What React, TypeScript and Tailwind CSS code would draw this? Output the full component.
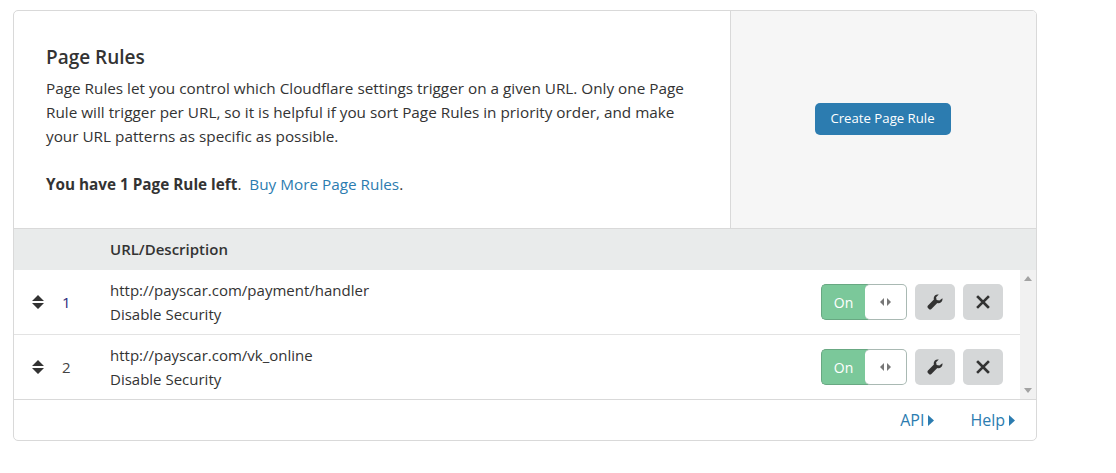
import React from "react";

const rules = [
  { id: 1, url: "http://payscar.com/payment/handler" },
  { id: 2, url: "http://payscar.com/vk_online" },
];

const SortIcon = () => (
  <svg width="12" height="16" viewBox="0 0 12 16" className="text-[#333]">
    <path d="M6 1 L12 7 L0 7 Z M0 9 L12 9 L6 15 Z" fill="currentColor" />
  </svg>
);

const WrenchIcon = () => (
  <svg width="16" height="16" viewBox="0 0 16 16">
    <path
      d="M15.4 4.2c.3 1.300-.1 2.800-1.100 3.800-1.100 1.100-2.600 1.400-4 1L4.400 14.900c-.7.7-1.800.7-2.500 0l-.9-.9c-.7-.7-.7-1.800 0-2.500l5.900-5.900c-.4-1.400-.1-2.900 1-4C8.900.6 10.400.2 11.800.6L9.100 3.300l.5 2.800 2.800.5 3-2.400z"
      fill="#333"
    />
  </svg>
);

const CloseIcon = () => (
  <svg width="14" height="14" viewBox="0 0 14 14">
    <path d="M2 2 L12 12 M12 2 L2 12" stroke="#333" strokeWidth="2.600" strokeLinecap="square" />
  </svg>
);

const Caret = () => (
  <svg width="6" height="11" viewBox="0 0 6 11" className="ml-[4px] inline-block">
    <path d="M0 0 L6 5.500 L0 11 Z" fill="#2c7cb0" />
  </svg>
);

const Toggle = () => (
  <div className="flex h-[36px] w-[86px]">
    <div className="flex w-[49px] items-center justify-center rounded-l-[5px] border border-r-0 border-[#68a882] bg-[#7bc89a] pr-[5px] text-[14px] text-white">
      On
    </div>
    <div className="-ml-[5px] flex flex-1 items-center justify-center gap-[3px] rounded-[5px] border border-l-0 border-[#a9b9b3] bg-white">
      <svg width="4" height="8" viewBox="0 0 4 8">
        <path d="M4 0 L0 4 L4 8 Z" fill="#777" />
      </svg>
      <svg width="4" height="8" viewBox="0 0 4 8">
        <path d="M0 0 L4 4 L0 8 Z" fill="#777" />
      </svg>
    </div>
  </div>
);

const IconButton = ({ children }: { children: React.ReactNode }) => (
  <button className="flex h-[36px] w-[40px] items-center justify-center rounded-[5px] bg-[#d5d7d8]">
    {children}
  </button>
);

export default function App() {
  return (
    <div className="min-h-[473px] bg-white pl-[13px] pt-[10px] font-['Open_Sans',sans-serif] text-[15px] text-[#333]">
      <div className="w-[1024px] overflow-hidden rounded-[5px] border border-[#d9d9d9]">
        {/* top panel */}
        <div className="flex h-[218px] border-b border-[#d9d9d9]">
          <div className="w-[716px] pl-[32px] pr-[42px] pt-[33px] text-[15.300px]">
            <h2 className="text-[19px] leading-[26px] font-semibold">Page Rules</h2>
            <p className="mt-[6px] leading-[24px]">
              Page Rules let you control which Cloudflare settings trigger on a given URL. Only one Page Rule will
              trigger per URL, so it is helpful if you sort Page Rules in priority order, and make your URL patterns
              as specific as possible.
            </p>
            <p className="mt-[24px] leading-[24px]">
              <b className="font-bold">You have 1 Page Rule left</b>.&nbsp; <span className="text-[#2c7cb0]">Buy More Page Rules</span>.
            </p>
          </div>
          <div className="flex flex-1 items-center justify-center border-l border-[#d9d9d9] bg-[#f6f6f6] pr-[2px] pb-[2px]">
            <button className="h-[32px] w-[136px] rounded-[5px] bg-[#2c7cb0] text-[13.200px] text-white">
              Create Page Rule
            </button>
          </div>
        </div>

        {/* table header */}
        <div className="flex h-[41px] items-center bg-[#e9ebeb] pl-[96px] font-semibold">URL/Description</div>

        {/* rows */}
        <div className="flex border-b border-[#d9d9d9]">
          <div className="flex-1">
            {rules.map((rule, i) => (
              <div
                key={rule.id}
                className={`flex items-center ${i === 0 ? "h-[65px] border-b border-[#e3e3e3]" : "h-[64px]"}`}
              >
                <div className="flex w-[48px] justify-center mr-[-2px]">
                  <SortIcon />
                </div>
                <div className={`w-[50px] pl-[2px] ${rule.id === 1 ? "text-[#2b2b7b]" : "text-[#444]"}`}>{rule.id}</div>
                <div className="flex-1 leading-[24px]">
                  <div>{rule.url}</div>
                  <div>Disable Security</div>
                </div>
                <div className="flex gap-[8px] pr-[17px]">
                  <Toggle />
                  <IconButton>
                    <WrenchIcon />
                  </IconButton>
                  <IconButton>
                    <CloseIcon />
                  </IconButton>
                </div>
              </div>
            ))}
          </div>
          {/* scrollbar */}
          <div className="flex w-[16px] flex-col items-center justify-between bg-[#f1f1f1] py-[6px]">
            <svg width="8" height="5" viewBox="0 0 8 5">
              <path d="M4 0 L8 5 L0 5 Z" fill="#a3a3a3" />
            </svg>
            <svg width="8" height="5" viewBox="0 0 8 5">
              <path d="M0 0 L8 0 L4 5 Z" fill="#a3a3a3" />
            </svg>
          </div>
        </div>

        {/* footer */}
        <div className="flex h-[40px] items-center justify-end gap-[36px] pr-[21px] text-[16px] text-[#2c7cb0]">
          <span className="flex items-center">
            API
            <Caret />
          </span>
          <span className="flex items-center">
            Help
            <Caret />
          </span>
        </div>
      </div>
    </div>
  );
}
